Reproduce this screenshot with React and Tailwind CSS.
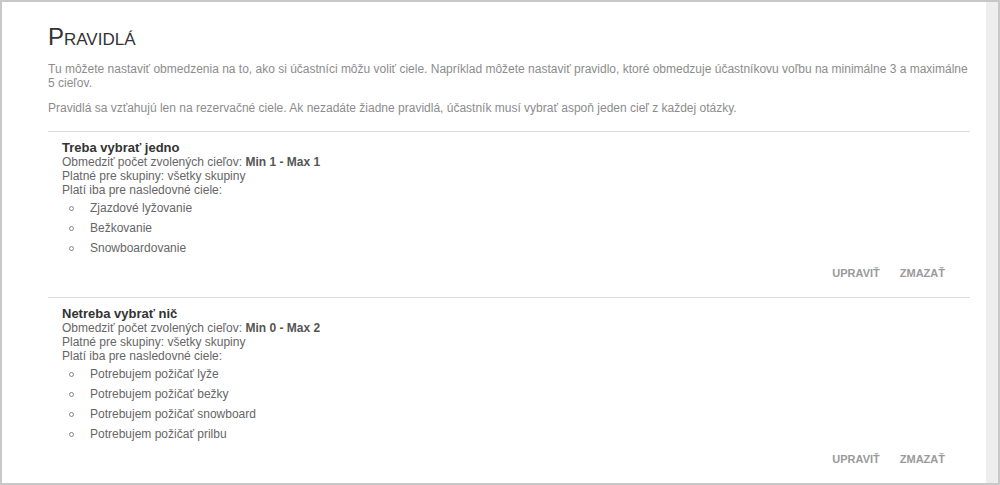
const RULES = [
  {
    title: "Treba vybrať jedno",
    min: 1,
    max: 1,
    groups: "všetky skupiny",
    targets: ["Zjazdové lyžovanie", "Bežkovanie", "Snowboardovanie"],
  },
  {
    title: "Netreba vybrať nič",
    min: 0,
    max: 2,
    groups: "všetky skupiny",
    targets: [
      "Potrebujem požičať lyže",
      "Potrebujem požičať bežky",
      "Potrebujem požičať snowboard",
      "Potrebujem požičať prilbu",
    ],
  },
];

function Rule({ rule }) {
  return (
    <div className="border-t border-[#dcdcdc]">
      <div className="pl-[14px] pt-[8px]">
        <h3 className="text-[13px] leading-[15px] font-bold text-[#333]">{rule.title}</h3>
        <div className="text-[12px] leading-[14px] text-[#666]">
          <p>
            Obmedziť počet zvolených cieľov:{" "}
            <b className="text-[#555]">
              Min {rule.min} - Max {rule.max}
            </b>
          </p>
          <p>Platné pre skupiny: {rule.groups}</p>
          <p>Platí iba pre nasledovné ciele:</p>
        </div>
        <ul className="mt-[1px] text-[12px] leading-[20px] text-[#666]">
          {rule.targets.map((t) => (
            <li key={t} className="flex items-center">
              <span className="ml-[7px] mr-[16px] w-[5px] h-[5px] rounded-full border border-[#888]" />
              {t}
            </li>
          ))}
        </ul>
      </div>
      <div className="flex justify-end gap-5 pr-[25px] pt-[5px] pb-[14px] text-[11px] leading-[20px] font-bold text-[#9a9a9a] uppercase">
        <button className="uppercase">Upraviť</button>
        <button className="uppercase">Zmazať</button>
      </div>
    </div>
  );
}

export default function App() {
  return (
    <div
      className="w-[1000px] h-[485px] border-2 border-[#c8c8c8] flex overflow-hidden bg-white"
      style={{ fontFamily: '"Liberation Sans", Arial, sans-serif' }}
    >
      <main className="flex-1 pl-[46px] pr-[16px] pt-[21px] overflow-hidden">
        <h1 className="text-[24px] leading-[28px] text-[#333] [font-variant:small-caps] mb-[11px]">
          Pravidlá
        </h1>
        <p className="text-[12px] leading-[14px] text-[#8c8c8c] mb-[11px]">
          Tu môžete nastaviť obmedzenia na to, ako si účastníci môžu voliť ciele. Napríklad môžete nastaviť
          pravidlo, ktoré obmedzuje účastníkovu voľbu na minimálne 3 a maximálne 5 cieľov.
        </p>
        <p className="text-[12px] leading-[14px] text-[#8c8c8c] mb-[16px]">
          Pravidlá sa vzťahujú len na rezervačné ciele. Ak nezadáte žiadne pravidlá, účastník musí vybrať
          aspoň jeden cieľ z každej otázky.
        </p>
        {RULES.map((r) => (
          <Rule key={r.title} rule={r} />
        ))}
      </main>
      <div className="w-[12px] bg-[#eeeeee]" />
    </div>
  );
}
